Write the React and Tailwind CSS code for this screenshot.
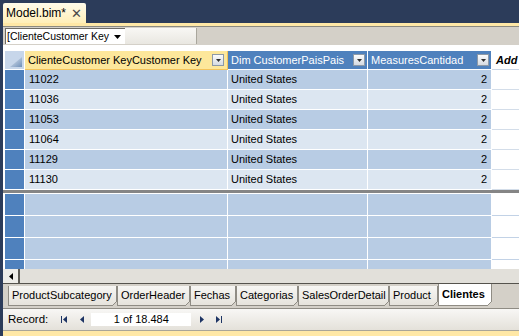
import React from 'react';

const rows = ['11022', '11036', '11053', '11064', '11129', '11130'];

const tabs = [
  { name: 'ProductSubcategory', w: 'w-[109px]' },
  { name: 'OrderHeader', w: 'w-[73px]' },
  { name: 'Fechas', w: 'w-[46px]' },
  { name: 'Categorias', w: 'w-[62px]' },
  { name: 'SalesOrderDetail', w: 'w-[91px]' },
  { name: 'Product', w: 'w-[49px]' },
];

const FilterButton = () => (
  <div className="w-[12px] h-[12px] border border-[#8d99a7] bg-gradient-to-b from-[#fbfbfb] to-[#d6dbe2] flex items-center justify-center shrink-0">
    <svg width="5" height="3" viewBox="0 0 5 3">
      <path d="M0 0h5L2.5 3z" fill="#2f2f2f" />
    </svg>
  </div>
);

const Tri = ({ dir }) => (
  <svg width="4" height="7" viewBox="0 0 4 7">
    {dir === 'left' ? <path d="M4 0v7L0 3.5z" fill="#1d3464" /> : <path d="M0 0v7l4-3.5z" fill="#1d3464" />}
  </svg>
);

const Tab = ({ name, w, active }) => (
  <div
    className={`relative ${w} shrink-0 ${
      active ? 'h-[22px] bg-white font-bold' : 'h-[20px] bg-gradient-to-b from-[#f7f6f3] to-[#e6e3dc] mt-[2px]'
    } border-l border-r border-b border-[#8f8c84] flex items-center pl-[3px] text-[11px] text-black whitespace-nowrap`}
  >
    {name}
    <svg className="absolute right-[-1px] bottom-[-1px]" width="5" height="5" viewBox="0 0 5 5">
      <path d="M5 0v5H0z" fill="#d4d0c8" />
      <path d="M5 0L0 5" stroke="#8f8c84" strokeWidth="1" />
    </svg>
  </div>
);

const App = () => {
  return (
    <div className="w-[519px] h-[336px] bg-[#2c3c5a] flex flex-col overflow-hidden font-['Liberation_Sans',Arial,sans-serif] text-[11px] text-black whitespace-nowrap">
      {/* document tab */}
      <div className="h-[23px] pl-[3px] pt-[3px] flex shrink-0">
        <div className="w-[83px] h-[20px] bg-gradient-to-b from-[#fffbea] to-[#ffefb8] rounded-t-[2px] flex items-center pl-[3px] pr-[4px] justify-between">
          <span className="text-[12px]">Model.bim*</span>
          <span className="text-[13px] text-[#4a4a4a] leading-none">✕</span>
        </div>
      </div>

      <div className="ml-[3px] flex-1 min-h-0 flex flex-col bg-[#d4d0c8]">
        <div className="h-[3px] bg-[#ffe8a6] shrink-0" />
        <div className="h-px bg-[#8c8a80] shrink-0" />

        {/* filter bar */}
        <div className="h-[18px] flex items-center pl-[2px] shrink-0">
          <div className="w-[120px] h-[16px] bg-white border-t border-l border-[#6d6b64] flex items-center justify-between pl-[1px] pr-[4px] overflow-hidden">
            <span className="text-[10.5px]">[ClienteCustomer Key</span>
            <svg width="7" height="4" viewBox="0 0 7 4" className="shrink-0">
              <path d="M0 0h7L3.5 4z" fill="#000" />
            </svg>
          </div>
          <div className="w-[72px] h-[16px] bg-gradient-to-b from-[#f8f7f4] to-[#e9e7e1] border-r border-[#a9a69c]" />
        </div>

        {/* grid */}
        <div className="flex-1 min-h-0 bg-white pl-[2px] pt-[6px] overflow-hidden flex flex-col">
          {/* header */}
          <div className="flex h-[19px] shrink-0">
            <div className="relative w-[20px] h-full bg-[#c7d6ea] border-r border-b border-white">
              <svg className="absolute right-[2px] bottom-[2px]" width="12" height="10" viewBox="0 0 12 10">
                <defs>
                  <linearGradient id="corner" x1="0" y1="0" x2="1" y2="1">
                    <stop offset="0" stopColor="#e6edf6" />
                    <stop offset="1" stopColor="#6f8fb8" />
                  </linearGradient>
                </defs>
                <path d="M12 0v10H0z" fill="url(#corner)" />
              </svg>
            </div>
            <div className="w-[203px] h-full bg-[#fde79b] border-r border-b border-[#f3c35a] flex items-center justify-between pl-[3px] pr-[3px]">
              <span>ClienteCustomer KeyCustomer Key</span>
              <FilterButton />
            </div>
            <div className="w-[140px] h-full bg-[#4f81bd] border-r border-b border-white flex items-center justify-between pl-[3px] pr-[2px] text-white">
              <span>Dim CustomerPaisPais</span>
              <FilterButton />
            </div>
            <div className="w-[124px] h-full bg-[#4f81bd] border-r border-b border-white flex items-center justify-between pl-[3px] pr-[2px] text-white">
              <span>MeasuresCantidad</span>
              <FilterButton />
            </div>
            <div className="flex-1 h-full bg-white border-b border-[#c9d6e6] flex items-center pl-[4px] font-bold italic overflow-hidden">
              Add
            </div>
          </div>

          {/* data rows */}
          {rows.map((id, i) => {
            const bg = i % 2 === 0 ? 'bg-[#b8cce4]' : 'bg-[#dce6f1]';
            return (
              <div key={id} className="flex h-[20px] shrink-0">
                <div className="w-[20px] h-full bg-[#4f81bd] border-r border-b border-white" />
                <div className={`w-[203px] h-full ${bg} border-r border-b border-white flex items-center pl-[4px]`}>{id}</div>
                <div className={`w-[140px] h-full ${bg} border-r border-b border-white flex items-center pl-[3px]`}>United States</div>
                <div className={`w-[124px] h-full ${bg} border-r border-b border-white flex items-center justify-end pr-[4px]`}>2</div>
                <div className="flex-1 h-full bg-white border-b border-[#d3dde9]" />
              </div>
            );
          })}

          <div className="h-[3px] bg-[#858585] shrink-0 ml-[-2px]" />
          <div className="h-px bg-white shrink-0" />

          {/* new row area */}
          {[0, 1, 2, 3].map((n) => (
            <div key={n} className="flex h-[22px] shrink-0">
              <div className="w-[20px] h-full bg-[#4f81bd] border-r border-b border-white" />
              <div className="w-[203px] h-full bg-[#b8cce4] border-r border-b border-white" />
              <div className="w-[140px] h-full bg-[#b8cce4] border-r border-b border-white" />
              <div className="w-[124px] h-full bg-[#b8cce4] border-r border-b border-white" />
              <div className="flex-1 h-full bg-white border-b border-[#c2d2e6]" />
            </div>
          ))}
        </div>

        {/* horizontal scrollbar */}
        <div className="h-[15px] flex bg-[#e2e0da] border-b border-[#55534d] shrink-0">
          <div className="w-[17px] h-full bg-[#eeede9] border-r-2 border-[#5f5d57] flex items-center justify-center">
            <svg width="4" height="7" viewBox="0 0 4 7">
              <path d="M4 0v7L0 3.5z" fill="#000" />
            </svg>
          </div>
        </div>

        {/* sheet tabs */}
        <div className="h-[25px] flex pl-[5px] items-start bg-[#d4d0c8] border-b border-[#8f8c84] shrink-0">
          {tabs.map((t) => (
            <Tab key={t.name} name={t.name} w={t.w} />
          ))}
          <Tab name="Clientes" w="w-[54px]" active />
        </div>

        {/* record navigator */}
        <div className="h-[22px] flex items-center bg-gradient-to-b from-[#f8f7f5] to-[#e4e1da] border-b border-[#a9a598] pl-[5px] shrink-0">
          <span className="text-[11.5px] mr-[13px]">Record:</span>
          <div className="flex items-center gap-[1px] mr-[13px]">
            <div className="w-[1px] h-[7px] bg-[#1d3464]" />
            <Tri dir="left" />
          </div>
          <div className="mr-[7px]">
            <Tri dir="left" />
          </div>
          <div className="w-[100px] h-[13px] bg-white flex items-center justify-center text-[11px]">1 of 18.484</div>
          <div className="ml-[9px]">
            <Tri dir="right" />
          </div>
          <div className="flex items-center gap-[1px] ml-[12px]">
            <Tri dir="right" />
            <div className="w-[1px] h-[7px] bg-[#1d3464]" />
          </div>
        </div>
        <div className="h-[5px] bg-[#ffe8a6] shrink-0" />
      </div>
    </div>
  );
};

export default App;
